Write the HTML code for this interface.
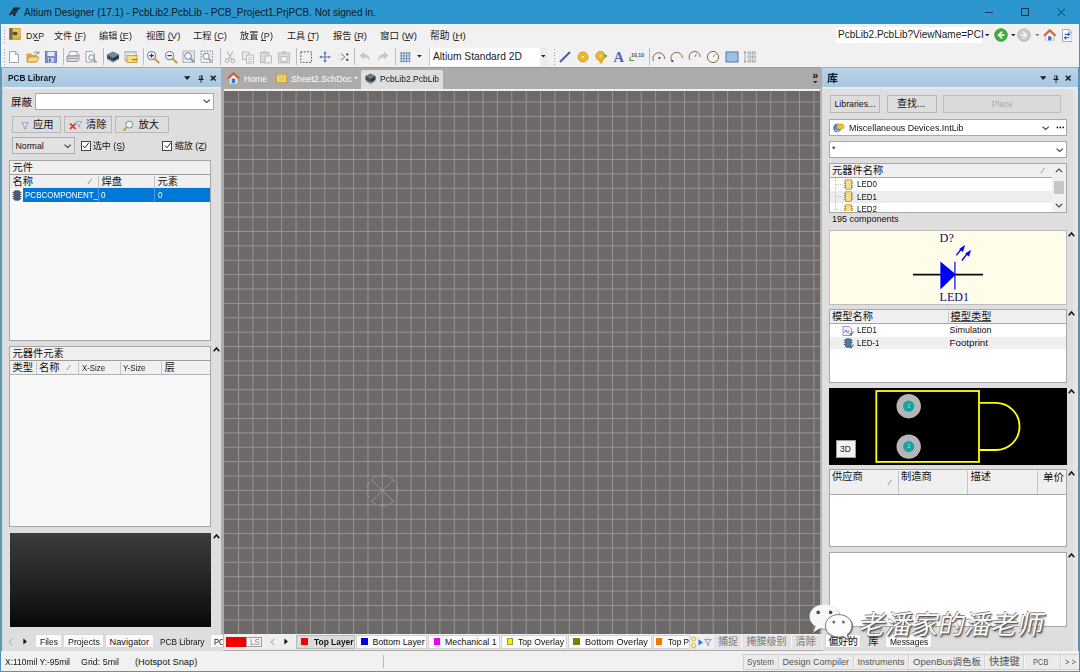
<!DOCTYPE html>
<html lang="zh"><head><meta charset="utf-8"><title>Altium Designer (17.1) - PcbLib2.PcbLib</title>
<style>
html,body{margin:0;padding:0}
body{width:1080px;height:672px;position:relative;overflow:hidden;background:#e6e6e6;font-family:"Liberation Sans","Noto Sans CJK SC",sans-serif;}
div,span,svg{position:absolute;}
span{white-space:pre;line-height:16px;height:16px;transform-origin:0 50%;}
</style></head>
<body>
<div style="left:0px;top:0px;width:1080px;height:24px;background:#2c97cf;"></div>
<div style="left:0px;top:24px;width:1080px;height:43px;background:#f1f1f1;"></div>
<div style="left:0px;top:24px;width:1px;height:648px;background:#4f90bf;"></div>
<div style="left:1079px;top:24px;width:1px;height:648px;background:#4f90bf;"></div>
<div style="left:0px;top:670.6px;width:1080px;height:1.4px;background:#4a9aba;"></div>
<svg style="left:7.5px;top:6.5px;" width="12.5" height="9.5" viewBox="0 0 12.5 9.5"><path d="M0.3 9 L5.6 0.6 H8.2 L7.4 9 H5.2 L5.4 7 H3.6 L2.6 9 Z M4.4 5.4 H5.6 L5.9 3 Z" fill="#17262e"/><path d="M8.2 0.6 H12.3 L11.6 2.3 H10.3 L8.4 6.4 L8 3.2 Z" fill="#17262e"/><path d="M0.3 9 H2.6 L3 8.2 H0.8 Z" fill="#b8962e"/></svg>
<span style="left:24px;top:4.5px;font-size:10px;color:#0a1a24;">Altium Designer (17.1) - PcbLib2.PcbLib - PCB_Project1.PrjPCB. Not signed in.</span>
<div style="left:985px;top:11.7px;width:8.3px;height:0.9px;background:#12344e;"></div>
<div style="left:1021px;top:8px;width:8px;height:8px;border:1px solid #12344e;box-sizing:border-box;"></div>
<svg style="left:1056.8px;top:7.6px;" width="8.6" height="8.6" viewBox="0 0 8.6 8.6"><path d="M0.5 0.5 L8.1 8.1 M8.1 0.5 L0.5 8.1" stroke="#12344e" stroke-width="0.95" fill="none"/></svg>
<div style="left:4px;top:27px;width:1px;height:1px;background:#9aa0a8;"></div>
<div style="left:4px;top:30px;width:1px;height:1px;background:#9aa0a8;"></div>
<div style="left:4px;top:33px;width:1px;height:1px;background:#9aa0a8;"></div>
<div style="left:4px;top:36px;width:1px;height:1px;background:#9aa0a8;"></div>
<div style="left:4px;top:39px;width:1px;height:1px;background:#9aa0a8;"></div>
<div style="left:4px;top:42px;width:1px;height:1px;background:#9aa0a8;"></div>
<svg style="left:9.4px;top:28px;" width="11.5" height="11.6" viewBox="0 0 11.5 11.6"><rect x="0" y="0" width="11.5" height="11.6" fill="#e6c648"/><rect x="0" y="0" width="3.6" height="11.6" fill="#6e6a58"/><rect x="3.6" y="8.2" width="7.9" height="3.4" fill="#d8b83c"/><path d="M3.6 4 H5.5 V7 H3.6 Z" fill="#5a5444"/><circle cx="6.6" cy="5.6" r="1.9" fill="#5a4a3a"/><rect x="0.3" y="0.3" width="10.9" height="11" fill="none" stroke="#a89438" stroke-width="0.6"/></svg>
<span style="left:26px;top:27.6px;font-size:8.75px;color:#1a1a1a;">DXP</span>
<span style="left:54px;top:27.6px;font-size:9px;color:#1a1a1a;">文件 (F)</span>
<span style="left:99px;top:27.6px;font-size:9.25px;color:#1a1a1a;transform:scaleX(0.988);">编辑 (E)</span>
<span style="left:146px;top:27.6px;font-size:9.5px;color:#1a1a1a;">视图 (V)</span>
<span style="left:193px;top:27.6px;font-size:9.25px;color:#1a1a1a;">工程 (C)</span>
<span style="left:240px;top:27.6px;font-size:9.25px;color:#1a1a1a;transform:scaleX(0.988);">放置 (P)</span>
<span style="left:287px;top:27.6px;font-size:9px;color:#1a1a1a;">工具 (T)</span>
<span style="left:333px;top:27.6px;font-size:9.25px;color:#1a1a1a;">报告 (R)</span>
<span style="left:380px;top:27.6px;font-size:9.5px;color:#1a1a1a;">窗口 (W)</span>
<span style="left:430px;top:27.6px;font-size:9.75px;color:#1a1a1a;">帮助 (H)</span>
<div style="left:33.8px;top:39.6px;width:5px;height:0.8px;background:#333;"></div>
<div style="left:74.8px;top:39.6px;width:5px;height:0.8px;background:#333;"></div>
<div style="left:120.3px;top:39.6px;width:5px;height:0.8px;background:#333;"></div>
<div style="left:168.3px;top:39.6px;width:5px;height:0.8px;background:#333;"></div>
<div style="left:215.3px;top:39.6px;width:5px;height:0.8px;background:#333;"></div>
<div style="left:261.3px;top:39.6px;width:5px;height:0.8px;background:#333;"></div>
<div style="left:308.3px;top:39.6px;width:5px;height:0.8px;background:#333;"></div>
<div style="left:355.3px;top:39.6px;width:5px;height:0.8px;background:#333;"></div>
<div style="left:404.8px;top:39.6px;width:5px;height:0.8px;background:#333;"></div>
<div style="left:454.3px;top:39.6px;width:5px;height:0.8px;background:#333;"></div>
<div style="left:836px;top:27px;width:146px;height:16px;background:#ffffff;"></div>
<span style="left:838px;top:27.4px;font-size:10px;color:#1a1a1a;">PcbLib2.PcbLib?ViewName=PCI</span>
<svg style="left:984.7px;top:34.35px;" width="4.6" height="2.8" viewBox="0 0 4.6 2.8"><path d="M0 0 H4.6 L2.3 2.3 Z" fill="#222"/></svg>
<svg style="left:993.6px;top:28.2px;" width="14" height="14" viewBox="0 0 14 14"><circle cx="7" cy="7" r="6.3" fill="#3fae3a" stroke="#2a8a2a" stroke-width="0.7"/><path d="M8.2 3.6 L4.6 7 L8.2 10.4 M4.8 7 H10.5" stroke="#fff" stroke-width="1.6" fill="none"/></svg>
<svg style="left:1010.7px;top:34.35px;" width="4.6" height="2.8" viewBox="0 0 4.6 2.8"><path d="M0 0 H4.6 L2.3 2.3 Z" fill="#222"/></svg>
<svg style="left:1017px;top:28.2px;" width="14" height="14" viewBox="0 0 14 14"><circle cx="7" cy="7" r="6.3" fill="#c9c9c9" stroke="#b0b0b0" stroke-width="0.7"/><path d="M5.8 3.6 L9.4 7 L5.8 10.4 M9.2 7 H3.5" stroke="#f4f4f4" stroke-width="1.6" fill="none"/></svg>
<svg style="left:1034.7px;top:34.35px;" width="4.6" height="2.8" viewBox="0 0 4.6 2.8"><path d="M0 0 H4.6 L2.3 2.3 Z" fill="#777"/></svg>
<svg style="left:1042.8px;top:28.6px;" width="13.5" height="12.8" viewBox="0 0 13.5 12.8"><path d="M0.9 6.8 L6.75 1.2 L12.6 6.8" stroke="#d8602c" stroke-width="1.9" fill="none"/><path d="M2.6 7 L6.75 3.3 L10.9 7 V12.2 H2.6 Z" fill="#f6f8fb" stroke="#9aa6b8" stroke-width="0.7"/><rect x="5" y="7.2" width="3.5" height="4.2" rx="0.6" fill="#3a78d0"/></svg>
<svg style="left:1061.6px;top:29.2px;" width="10.5" height="13" viewBox="0 0 10.5 13"><path d="M0.5 0.5 H7 L10 3.5 V12.5 H0.5 Z" fill="#fbfcfe" stroke="#8a9ab8" stroke-width="0.8"/><path d="M7 0.5 V3.5 H10" fill="none" stroke="#8a9ab8" stroke-width="0.7"/><path d="M2.6 5.4 H7.6 M6 3.9 L7.8 5.4 L6 6.9 M7.6 8.8 H2.6 M4.2 7.3 L2.4 8.8 L4.2 10.3" stroke="#2a62c8" stroke-width="1.1" fill="none"/></svg>
<div style="left:4px;top:49px;width:1px;height:1px;background:#9aa0a8;"></div>
<div style="left:4px;top:52px;width:1px;height:1px;background:#9aa0a8;"></div>
<div style="left:4px;top:55px;width:1px;height:1px;background:#9aa0a8;"></div>
<div style="left:4px;top:58px;width:1px;height:1px;background:#9aa0a8;"></div>
<div style="left:4px;top:61px;width:1px;height:1px;background:#9aa0a8;"></div>
<div style="left:4px;top:64px;width:1px;height:1px;background:#9aa0a8;"></div>
<div style="left:62.9px;top:48px;width:1px;height:17px;background:#b9bcc2;"></div>
<div style="left:102.8px;top:48px;width:1px;height:17px;background:#b9bcc2;"></div>
<div style="left:142.7px;top:48px;width:1px;height:17px;background:#b9bcc2;"></div>
<div style="left:219.5px;top:48px;width:1px;height:17px;background:#b9bcc2;"></div>
<div style="left:296px;top:48px;width:1px;height:17px;background:#b9bcc2;"></div>
<div style="left:354.2px;top:48px;width:1px;height:17px;background:#b9bcc2;"></div>
<div style="left:394.5px;top:48px;width:1px;height:17px;background:#b9bcc2;"></div>
<div style="left:648.9px;top:48px;width:1px;height:17px;background:#b9bcc2;"></div>
<svg style="left:7.3px;top:49.8px;" width="14" height="14" viewBox="0 0 14 14"><path d="M2.5 1.5 H8.5 L11.5 4.5 V12.5 H2.5 Z" fill="#fdfdfe" stroke="#8d98aa" stroke-width="0.9"/><path d="M8.5 1.5 V4.5 H11.5" fill="none" stroke="#8d98aa" stroke-width="0.8"/></svg>
<svg style="left:25.6px;top:49.8px;" width="14" height="14" viewBox="0 0 14 14"><path d="M1 4 H5 L6 5.2 H10.5 V12 H1 Z" fill="#e2b14a" stroke="#b98a2a" stroke-width="0.7"/><path d="M2.8 7 H13 L10.8 12 H1 Z" fill="#f7d983" stroke="#b98a2a" stroke-width="0.7"/><path d="M8 3 Q10.5 0.8 12.5 3.2 M12.8 1 V3.6 H10.3" stroke="#7c8a9c" stroke-width="0.9" fill="none"/></svg>
<svg style="left:44px;top:49.8px;" width="14" height="14" viewBox="0 0 14 14"><rect x="1.5" y="1.5" width="11" height="11" fill="#7f8ccc" stroke="#5a68ac" stroke-width="0.8"/><rect x="3.5" y="1.8" width="7" height="4.2" fill="#e9ecf7"/><rect x="4" y="8" width="6" height="4.5" fill="#c8cde6"/><rect x="5" y="8.8" width="1.6" height="3" fill="#4a5aa0"/></svg>
<svg style="left:66.3px;top:49.8px;" width="14" height="14" viewBox="0 0 14 14"><path d="M4 1.5 H11.5 L10 6 H2.5 Z" fill="#fafafa" stroke="#8a8f98" stroke-width="0.8"/><path d="M1 6 H11.5 L13 4.5 V9.5 L11.5 11.5 H1 Z" fill="#d5d7dc" stroke="#7d828c" stroke-width="0.8"/><path d="M1 8.5 H11.5" stroke="#8a8f98" stroke-width="0.7"/></svg>
<svg style="left:83.7px;top:49.8px;" width="14" height="14" viewBox="0 0 14 14"><path d="M2 1.5 H8 L10.5 4 V12 H2 Z" fill="#fdfdfe" stroke="#8d98aa" stroke-width="0.9"/><circle cx="7.5" cy="7.5" r="2.8" fill="#e8f2fb" stroke="#7d8ea8" stroke-width="1"/><path d="M9.6 9.6 L12.6 12.6" stroke="#c79a3a" stroke-width="1.8"/></svg>
<svg style="left:106px;top:49.8px;" width="14" height="14" viewBox="0 0 14 14"><path d="M7 2 L13 5 L7 8 L1 5 Z" fill="#6f8da6" stroke="#3a4c5a" stroke-width="0.6"/><path d="M1 5 V8.5 L7 11.8 V8 Z" fill="#3c4c58"/><path d="M13 5 V8.5 L7 11.8 V8 Z" fill="#2a3640"/><path d="M1 9.2 L7 12.6 L13 9.2" stroke="#9ab0c0" stroke-width="0.8" fill="none"/></svg>
<svg style="left:124.4px;top:49.8px;" width="14" height="14" viewBox="0 0 14 14"><rect x="1" y="1.5" width="11" height="9" fill="#f4f5f8" stroke="#8a96a8" stroke-width="0.8"/><rect x="1" y="1.5" width="11" height="2" fill="#c4ccd8"/><rect x="3" y="5.5" width="10" height="7" fill="#f7dc7c" stroke="#b8922e" stroke-width="0.8"/><rect x="8" y="9" width="5" height="1.2" fill="#8a7a3a"/></svg>
<svg style="left:145.8px;top:49.8px;" width="14" height="14" viewBox="0 0 14 14"><circle cx="5.6" cy="5.6" r="4.1" fill="#eef5fc" stroke="#7687a0" stroke-width="1.1"/><path d="M3.4 5.6 H7.8 M5.6 3.4 V7.8" stroke="#26364a" stroke-width="1.1"/><path d="M8.7 8.7 L12.6 12.6" stroke="#c9a044" stroke-width="2.1" stroke-linecap="round"/></svg>
<svg style="left:163.7px;top:49.8px;" width="14" height="14" viewBox="0 0 14 14"><circle cx="5.6" cy="5.6" r="4.1" fill="#eef5fc" stroke="#7687a0" stroke-width="1.1"/><path d="M3.4 5.6 H7.8" stroke="#26364a" stroke-width="1.1"/><path d="M8.7 8.7 L12.6 12.6" stroke="#c9a044" stroke-width="2.1" stroke-linecap="round"/></svg>
<svg style="left:182.4px;top:49.8px;" width="14" height="14" viewBox="0 0 14 14"><rect x="1" y="1" width="11.5" height="11.5" fill="#e3e6ea" stroke="#a4a9b2" stroke-width="0.8"/><circle cx="6" cy="6" r="3.3" fill="#f4f8fc" stroke="#7687a0" stroke-width="1"/><path d="M8.5 8.5 L12 12" stroke="#8a93a0" stroke-width="1.8"/></svg>
<svg style="left:200.4px;top:49.8px;" width="14" height="14" viewBox="0 0 14 14"><rect x="1" y="1" width="11.5" height="11.5" fill="#eceef2" stroke="#707a88" stroke-width="0.9" stroke-dasharray="1.6 1.2"/><circle cx="6.2" cy="6.2" r="3.1" fill="#f4f8fc" stroke="#7687a0" stroke-width="1"/><path d="M8.6 8.6 L11.6 11.6" stroke="#c9a044" stroke-width="1.8"/></svg>
<svg style="left:222.7px;top:49.8px;" width="14" height="14" viewBox="0 0 14 14"><path d="M4 1.5 L8.5 9 M10 1.5 L5.5 9" stroke="#b4b7bc" stroke-width="1.1" fill="none"/><circle cx="4.2" cy="10.8" r="1.9" fill="none" stroke="#b4b7bc" stroke-width="1.1"/><circle cx="9.8" cy="10.8" r="1.9" fill="none" stroke="#b4b7bc" stroke-width="1.1"/></svg>
<svg style="left:240.6px;top:49.8px;" width="14" height="14" viewBox="0 0 14 14"><rect x="1.5" y="2" width="6.5" height="7.5" fill="#ececee" stroke="#b4b7bc" stroke-width="0.9"/><rect x="5.5" y="5" width="7" height="8" fill="#f2f2f4" stroke="#b4b7bc" stroke-width="0.9"/><path d="M7 7.5 H11 M7 9.5 H11 M7 11.5 H10" stroke="#b4b7bc" stroke-width="0.7"/></svg>
<svg style="left:259px;top:49.8px;" width="14" height="14" viewBox="0 0 14 14"><rect x="1.5" y="2.5" width="8.5" height="10" fill="#d9dadd" stroke="#b4b7bc" stroke-width="0.9"/><rect x="3.8" y="1.2" width="4" height="2.4" fill="#c3c5c9"/><rect x="6" y="6" width="6.5" height="7" fill="#f2f2f4" stroke="#b4b7bc" stroke-width="0.9"/></svg>
<svg style="left:277.3px;top:49.8px;" width="14" height="14" viewBox="0 0 14 14"><rect x="1.5" y="3" width="11" height="9.8" fill="#dcdde0" stroke="#b4b7bc" stroke-width="0.9"/><rect x="4.5" y="1.2" width="5" height="3" fill="#c3c5c9"/><rect x="4" y="6.5" width="6" height="5" fill="#efeff1" stroke="#b4b7bc" stroke-width="0.8"/></svg>
<svg style="left:299px;top:49.8px;" width="14" height="14" viewBox="0 0 14 14"><rect x="1.8" y="1.8" width="10.6" height="10.6" fill="none" stroke="#4a5666" stroke-width="0.95" stroke-dasharray="1.8 1.3"/></svg>
<svg style="left:318px;top:49.8px;" width="14" height="14" viewBox="0 0 14 14"><path d="M7 2.5 V11.5 M2.5 7 H11.5" stroke="#5878b0" stroke-width="1.1"/><path d="M7 1.2 L8.6 3.4 H5.4 Z M7 12.8 L8.6 10.6 H5.4 Z M1.2 7 L3.4 5.4 V8.6 Z M12.8 7 L10.6 5.4 V8.6 Z" fill="#4a6aa8"/></svg>
<svg style="left:336.3px;top:49.8px;" width="14" height="14" viewBox="0 0 14 14"><path d="M4.8 3.4 L8.8 7 L4.8 10.6" stroke="#687280" stroke-width="1" fill="none"/><path d="M2 4.2 L3.4 5.6 M2 9.8 L3.4 8.4" stroke="#b4bac4" stroke-width="0.9" /><rect x="10.3" y="3.4" width="2" height="2" fill="#3a4452"/><rect x="10.3" y="8.8" width="2" height="2" fill="#3a4452"/></svg>
<svg style="left:357.7px;top:49.8px;" width="14" height="14" viewBox="0 0 14 14"><path d="M1.5 5.5 L6 1.8 V4 Q12 4 12 11.5 Q10 7.2 6 7.2 V9.4 Z" fill="#c3c6cb"/></svg>
<svg style="left:376px;top:49.8px;" width="14" height="14" viewBox="0 0 14 14"><path d="M12.5 5.5 L8 1.8 V4 Q2 4 2 11.5 Q4 7.2 8 7.2 V9.4 Z" fill="#c3c6cb"/></svg>
<svg style="left:397.65px;top:49.8px;" width="14.5" height="14" viewBox="0 0 14.5 14"><path d="M3.2 1.8 V12.4 M5.9 1.8 V12.4 M8.6 1.8 V12.4 M11.3 1.8 V12.4 M1.8 3.2 H12.6 M1.8 5.9 H12.6 M1.8 8.6 H12.6 M1.8 11.3 H12.6" stroke="#5674aa" stroke-width="0.75"/></svg>
<svg style="left:417.3px;top:55.3px;" width="4.8" height="2.9" viewBox="0 0 4.8 2.9"><path d="M0 0 H4.8 L2.4 2.4 Z" fill="#222"/></svg>
<div style="left:428.5px;top:48px;width:1px;height:17.5px;background:#c4c6ca;"></div>
<div style="left:430px;top:48px;width:110px;height:18px;background:#ffffff;"></div>
<div style="left:540px;top:48px;width:8px;height:18px;background:#ececec;"></div>
<span style="left:433px;top:48.5px;font-size:10.25px;color:#1a1a1a;">Altium Standard 2D</span>
<svg style="left:540.6px;top:55.3px;" width="4.8" height="2.9" viewBox="0 0 4.8 2.9"><path d="M0 0 H4.8 L2.4 2.4 Z" fill="#222"/></svg>
<div style="left:554px;top:49px;width:1px;height:1px;background:#9aa0a8;"></div>
<div style="left:554px;top:52px;width:1px;height:1px;background:#9aa0a8;"></div>
<div style="left:554px;top:55px;width:1px;height:1px;background:#9aa0a8;"></div>
<div style="left:554px;top:58px;width:1px;height:1px;background:#9aa0a8;"></div>
<div style="left:554px;top:61px;width:1px;height:1px;background:#9aa0a8;"></div>
<div style="left:554px;top:64px;width:1px;height:1px;background:#9aa0a8;"></div>
<svg style="left:557.9px;top:49.8px;" width="14" height="14" viewBox="0 0 14 14"><path d="M2 12 L12 2" stroke="#4a5f9a" stroke-width="2"/></svg>
<svg style="left:575.8px;top:49.8px;" width="14" height="14" viewBox="0 0 14 14"><circle cx="7" cy="7" r="5" fill="#f0c020" stroke="#b88a10" stroke-width="0.8"/><circle cx="7" cy="7" r="1.8" fill="#fbf2c8" stroke="#b88a10" stroke-width="0.6"/></svg>
<svg style="left:593.7px;top:49.8px;" width="14" height="14" viewBox="0 0 14 14"><rect x="5.5" y="8" width="3" height="5.5" fill="#e8b418"/><circle cx="6.5" cy="6" r="4.6" fill="#f0c020" stroke="#b88a10" stroke-width="0.8"/><circle cx="6.5" cy="6" r="1.7" fill="#fbf2c8" stroke="#b88a10" stroke-width="0.6"/><path d="M10.5 4.2 L13.5 6 L10.5 7.8 Z" fill="#3aa83a"/></svg>
<span style="left:613.5px;top:48.5px;font-size:14.5px;color:#4a66b8;font-weight:bold;font-family:'Liberation Serif','Noto Serif CJK SC',serif;">A</span>
<span style="left:631px;top:47px;font-size:5.25px;color:#4a5260;font-weight:bold;">10,10</span>
<svg style="left:629px;top:56px;" width="6" height="6" viewBox="0 0 6 6"><path d="M1 1 V4.5 H5" stroke="#3a9a3a" stroke-width="1.1" fill="none"/></svg>
<svg style="left:651.8px;top:49.8px;" width="14" height="14" viewBox="0 0 14 14"><path d="M1.5 11 A5.8 5.8 0 1 1 12.5 9" stroke="#8a6a4a" stroke-width="1" fill="none"/><circle cx="7.5" cy="8" r="1.1" fill="#2a3a7a"/></svg>
<svg style="left:670px;top:49.8px;" width="14" height="14" viewBox="0 0 14 14"><path d="M2 11.5 A5.8 5.8 0 1 1 12.5 8" stroke="#8a6a4a" stroke-width="1" fill="none"/><circle cx="2.4" cy="11" r="1.1" fill="#2a3a7a"/></svg>
<svg style="left:687.8px;top:49.8px;" width="14" height="14" viewBox="0 0 14 14"><path d="M2 10 A5.6 5.6 0 1 1 12.3 7" stroke="#8a6a4a" stroke-width="1" fill="none"/><path d="M7 7 L8.5 3.5" stroke="#8a6a4a" stroke-width="0.8"/></svg>
<svg style="left:706px;top:49.8px;" width="14" height="14" viewBox="0 0 14 14"><circle cx="7" cy="7" r="5.6" stroke="#8a6a4a" stroke-width="1" fill="#f8f6f2"/><path d="M7 7 L9.5 4" stroke="#8a6a4a" stroke-width="0.8"/></svg>
<svg style="left:724.5px;top:49.8px;" width="14" height="14" viewBox="0 0 14 14"><rect x="1" y="2" width="12" height="10" fill="#9dc0e4" stroke="#4a6a9a" stroke-width="0.9"/></svg>
<svg style="left:742.8px;top:49.8px;" width="14" height="14" viewBox="0 0 14 14"><path d="M2 1 V13 M1 2.5 H3 M1 11.5 H3" stroke="#7a8088" stroke-width="0.7"/><rect x="5" y="2" width="3" height="2" fill="none" stroke="#8a9098" stroke-width="0.7"/><rect x="9.5" y="2" width="3" height="2" fill="none" stroke="#8a9098" stroke-width="0.7"/><rect x="5" y="6" width="3" height="2" fill="none" stroke="#8a9098" stroke-width="0.7"/><rect x="9.5" y="6" width="3" height="2" fill="none" stroke="#8a9098" stroke-width="0.7"/><rect x="5" y="10" width="3" height="2" fill="none" stroke="#8a9098" stroke-width="0.7"/><rect x="9.5" y="10" width="3" height="2" fill="none" stroke="#8a9098" stroke-width="0.7"/></svg>
<div style="left:1px;top:67px;width:223px;height:584px;background:#dedede;"></div>
<div style="left:2px;top:67px;width:219px;height:1px;background:#a0a8ae;"></div>
<div style="left:2px;top:68px;width:219px;height:19px;background:linear-gradient(#c0d4e3 0%,#b3d0e7 25%,#a6c8e1 100%);"></div>
<div style="left:2px;top:87px;width:219px;height:2px;background:#e8eaec;"></div>
<span style="left:8px;top:69.5px;font-size:8.75px;color:#0c1822;transform:scaleX(0.949);font-weight:bold;">PCB Library</span>
<svg style="left:184.3px;top:76px;" width="6.4" height="4.4" viewBox="0 0 6.4 4.4"><path d="M0 0.3 H6.4 L3.2 4 Z" fill="#1a1a1a"/></svg>
<svg style="left:197.5px;top:74.6px;" width="6" height="8" viewBox="0 0 6 8"><path d="M1.5 0.4 H4.5 V4 H5.6 V5 H0.4 V4 H1.5 Z" fill="#1a1a1a"/><path d="M3 5 V7.8" stroke="#1a1a1a" stroke-width="0.9"/><rect x="2.2" y="1" width="0.9" height="2.8" fill="#c8dbe8"/></svg>
<svg style="left:209.8px;top:75.2px;" width="6.4" height="6.4" viewBox="0 0 6.4 6.4"><path d="M0.8 0.8 L5.6 5.6 M5.6 0.8 L0.8 5.6" stroke="#1a1a1a" stroke-width="1.45" fill="none"/></svg>
<div style="left:221px;top:88px;width:3px;height:546px;background:#adadad;"></div>
<span style="left:11px;top:93.5px;font-size:10.5px;color:#111;">屏蔽</span>
<div style="left:35px;top:93px;width:178.5px;height:17px;background:#fff;border:1px solid #a8a8a8;box-sizing:border-box;"></div>
<svg style="left:202.8px;top:99.4px;" width="7.4" height="4.7" viewBox="0 0 7.4 4.7"><path d="M0.5 0.6 L3.7 3.5 L6.9 0.6" stroke="#444" stroke-width="1.1" fill="none"/></svg>
<div style="left:12px;top:116px;width:48.5px;height:17px;background:#dddddd;border:1px solid #b8b8b8;box-sizing:border-box;"></div>
<div style="left:63.5px;top:116px;width:48.1px;height:17px;background:#dddddd;border:1px solid #b8b8b8;box-sizing:border-box;"></div>
<div style="left:114.7px;top:116px;width:53.9px;height:17px;background:#dddddd;border:1px solid #b8b8b8;box-sizing:border-box;"></div>
<svg style="left:20.5px;top:121.5px;" width="8" height="8" viewBox="0 0 8 8"><path d="M0.5 0.8 H7.5 L4.9 4 V7.2 L3.1 6.2 V4 Z" fill="#dfeaf6" stroke="#6f8fb8" stroke-width="0.8"/></svg>
<span style="left:33px;top:116.5px;font-size:10.25px;color:#111;">应用</span>
<svg style="left:69px;top:121px;" width="14" height="9" viewBox="0 0 14 9"><path d="M1 2.5 L6.5 8 M6.5 2.5 L1 8" stroke="#e02a1a" stroke-width="1.7" fill="none"/><g transform="translate(6.5,0) scale(0.85)"><path d="M0.5 0.8 H7.5 L4.9 4 V7.2 L3.1 6.2 V4 Z" fill="#dfeaf6" stroke="#6f8fb8" stroke-width="0.8"/></g></svg>
<span style="left:86px;top:116.5px;font-size:10.25px;color:#111;">清除</span>
<svg style="left:123px;top:119.5px;" width="11" height="11" viewBox="0 0 11 11"><circle cx="6.3" cy="4.6" r="3.5" fill="#f2f6fb" stroke="#7687a0" stroke-width="1"/><path d="M3.8 7.2 L1 10" stroke="#c9a044" stroke-width="1.8" stroke-linecap="round"/></svg>
<span style="left:138.5px;top:116.5px;font-size:10.25px;color:#111;">放大</span>
<div style="left:12px;top:137px;width:62.5px;height:16.5px;background:#e2e2e2;border:1px solid #b0b0b0;box-sizing:border-box;"></div>
<span style="left:15.5px;top:137.7px;font-size:8.75px;color:#111;">Normal</span>
<svg style="left:63.8px;top:143.6px;" width="7.4" height="4.7" viewBox="0 0 7.4 4.7"><path d="M0.5 0.6 L3.7 3.5 L6.9 0.6" stroke="#444" stroke-width="1.1" fill="none"/></svg>
<div style="left:80.5px;top:140.5px;width:10.2px;height:10.2px;background:#fff;border:1px solid #444;box-sizing:border-box;"></div>
<svg style="left:82px;top:142.3px;" width="7.5" height="6.8" viewBox="0 0 7.5 6.8"><path d="M0.8 3.6 L2.9 5.8 L6.8 0.8" stroke="#222" stroke-width="1" fill="none"/></svg>
<span style="left:93px;top:137.7px;font-size:8.75px;color:#111;transform:scaleX(1.013);">选中 (S)</span>
<div style="left:118px;top:149.8px;width:4.5px;height:0.8px;background:#333;"></div>
<div style="left:162.2px;top:140.5px;width:10.2px;height:10.2px;background:#fff;border:1px solid #444;box-sizing:border-box;"></div>
<svg style="left:163.7px;top:142.3px;" width="7.5" height="6.8" viewBox="0 0 7.5 6.8"><path d="M0.8 3.6 L2.9 5.8 L6.8 0.8" stroke="#222" stroke-width="1" fill="none"/></svg>
<span style="left:174.7px;top:137.7px;font-size:9px;color:#111;">缩放 (Z)</span>
<div style="left:199.5px;top:149.8px;width:4.5px;height:0.8px;background:#333;"></div>
<div style="left:9.4px;top:160.4px;width:201.4px;height:180.8px;background:#f8f8f8;border:1px solid #a6a6a6;box-sizing:border-box;"></div>
<div style="left:10.4px;top:161.4px;width:199.4px;height:13.3px;background:#f0f0f0;"></div>
<div style="left:10.4px;top:174px;width:199.4px;height:1px;background:#9c9c9c;"></div>
<span style="left:12.5px;top:160px;font-size:10.25px;color:#111;">元件</span>
<div style="left:10.4px;top:175px;width:199.4px;height:13px;background:#f0f0f0;"></div>
<div style="left:10.4px;top:187.4px;width:199.4px;height:1px;background:#e4e4e4;"></div>
<span style="left:12.5px;top:174px;font-size:10.25px;color:#111;">名称</span>
<span style="left:87.5px;top:174px;font-size:8px;color:#888;transform:scaleX(1.349);font-style:italic;">/</span>
<div style="left:98px;top:176px;width:0.8px;height:12px;background:#c4c4c4;"></div>
<span style="left:101.5px;top:174px;font-size:10.25px;color:#111;">焊盘</span>
<div style="left:154.2px;top:176px;width:0.8px;height:12px;background:#c4c4c4;"></div>
<span style="left:157.5px;top:174px;font-size:10.25px;color:#111;">元素</span>
<div style="left:23px;top:188.4px;width:186.8px;height:13.2px;background:#0078d7;"></div>
<div style="left:98px;top:188.4px;width:0.8px;height:13.2px;background:#4aa0e6;"></div>
<div style="left:154.2px;top:188.4px;width:0.8px;height:13.2px;background:#4aa0e6;"></div>
<svg style="left:11.8px;top:189.6px;" width="10" height="11" viewBox="0 0 10 11"><rect x="2.2" y="0.8" width="5.6" height="9.4" rx="1" fill="#4a5a7c" stroke="#34405a" stroke-width="0.7"/><path d="M0.6 2.5 H2.2 M0.6 4.5 H2.2 M0.6 6.5 H2.2 M0.6 8.5 H2.2 M7.8 2.5 H9.4 M7.8 4.5 H9.4 M7.8 6.5 H9.4 M7.8 8.5 H9.4" stroke="#39424c" stroke-width="0.9"/></svg>
<span style="left:24.5px;top:187px;font-size:8.75px;color:#fff;transform:scaleX(0.916);">PCBCOMPONENT_</span>
<span style="left:101px;top:187px;font-size:8.75px;color:#fff;transform:scaleX(0.925);">0</span>
<span style="left:157.5px;top:187px;font-size:8.75px;color:#fff;transform:scaleX(0.925);">0</span>
<div style="left:9.4px;top:346.2px;width:201.4px;height:181.3px;background:#f8f8f8;border:1px solid #a6a6a6;box-sizing:border-box;"></div>
<div style="left:10.4px;top:347.2px;width:199.4px;height:13.2px;background:#f0f0f0;"></div>
<div style="left:10.4px;top:359.9px;width:199.4px;height:0.8px;background:#9c9c9c;"></div>
<span style="left:12.5px;top:346px;font-size:10.25px;color:#111;">元器件元素</span>
<div style="left:10.4px;top:360.7px;width:199.4px;height:13.8px;background:#f0f0f0;"></div>
<div style="left:10.4px;top:374px;width:199.4px;height:0.8px;background:#b4b4b4;"></div>
<span style="left:12.5px;top:359.8px;font-size:10.25px;color:#111;">类型</span>
<div style="left:35.8px;top:362px;width:0.8px;height:12px;background:#c4c4c4;"></div>
<div style="left:78.1px;top:362px;width:0.8px;height:12px;background:#c4c4c4;"></div>
<div style="left:119.6px;top:362px;width:0.8px;height:12px;background:#c4c4c4;"></div>
<div style="left:160.6px;top:362px;width:0.8px;height:12px;background:#c4c4c4;"></div>
<span style="left:39px;top:359.8px;font-size:10.25px;color:#111;">名称</span>
<span style="left:67px;top:359.8px;font-size:8px;color:#888;transform:scaleX(1.349);font-style:italic;">/</span>
<span style="left:81.5px;top:360.2px;font-size:8.75px;color:#222;transform:scaleX(0.892);">X-Size</span>
<span style="left:123px;top:360.2px;font-size:8.75px;color:#222;transform:scaleX(0.901);">Y-Size</span>
<span style="left:164.5px;top:359.8px;font-size:10.25px;color:#111;">层</span>
<svg style="left:212.5px;top:347px;" width="7" height="5" viewBox="0 0 7 5"><path d="M0.7 4.3 L3.5 1 L6.3 4.3" stroke="#111" stroke-width="1.5" fill="none"/></svg>
<div style="left:10px;top:532.5px;width:200.5px;height:94.8px;background:linear-gradient(#3c3c3c,#242424 50%,#090909);"></div>
<svg style="left:212.5px;top:533.5px;" width="7" height="5" viewBox="0 0 7 5"><path d="M0.7 4.3 L3.5 1 L6.3 4.3" stroke="#111" stroke-width="1.5" fill="none"/></svg>
<svg style="left:7.5px;top:637.5px;" width="5" height="8" viewBox="0 0 5 8"><path d="M4.2 0.8 L1 4 L4.2 7.2" stroke="#b8b8b8" stroke-width="1.1" fill="none"/></svg>
<svg style="left:22.5px;top:638.3px;" width="4.5" height="7" viewBox="0 0 4.5 7"><path d="M0.4 0.4 L3.9 3.5 L0.4 6.6 Z" fill="#111"/></svg>
<div style="left:34.8px;top:634.4px;width:27.5px;height:14px;background:#fbfbfb;border:1px solid #d9d9d9;box-sizing:border-box;"></div>
<span style="left:39.5px;top:633.6px;font-size:8.75px;color:#111;transform:scaleX(0.974);">Files</span>
<div style="left:63px;top:634.4px;width:41.3px;height:14px;background:#fbfbfb;border:1px solid #d9d9d9;box-sizing:border-box;"></div>
<span style="left:67.5px;top:633.6px;font-size:8.75px;color:#111;transform:scaleX(1.012);">Projects</span>
<div style="left:105px;top:634.4px;width:48.8px;height:14px;background:#fbfbfb;border:1px solid #d9d9d9;box-sizing:border-box;"></div>
<span style="left:109.5px;top:633.6px;font-size:9.25px;color:#111;">Navigator</span>
<span style="left:159.5px;top:633.6px;font-size:8.75px;color:#111;transform:scaleX(0.943);">PCB Library</span>
<div style="left:209.5px;top:634.4px;width:14.5px;height:14px;background:#fbfbfb;border:1px solid #d9d9d9;box-sizing:border-box;border-right:none;"></div>
<span style="left:214px;top:633.8px;font-size:8.75px;color:#111;transform:scaleX(0.864);width:9.5px;overflow:hidden;">PC</span>
<div style="left:221px;top:67px;width:601px;height:23px;background:#ababab;"></div>
<div style="left:221px;top:67px;width:601px;height:1px;background:#9c9c9c;"></div>
<div style="left:361px;top:70px;width:82px;height:20px;background:#dedede;border-radius:2px 2px 0 0;"></div>
<div style="left:224px;top:88.6px;width:596px;height:2.4px;background:#f0f0f0;"></div>
<svg style="left:227.3px;top:72.2px;" width="13" height="12.5" viewBox="0 0 13 12.5"><path d="M0.8 6.6 L6.5 1.2 L12.2 6.6" stroke="#d8602c" stroke-width="2" fill="none"/><path d="M2.4 6.8 L6.5 3.2 L10.6 6.8 V11.8 H2.4 Z" fill="#f6f8fb" stroke="#9aa6b8" stroke-width="0.6"/><rect x="4.6" y="6.6" width="3.8" height="4.4" rx="0.6" fill="#3a78d0"/></svg>
<span style="left:243.5px;top:70.5px;font-size:8.75px;color:#fff;transform:scaleX(0.985);">Home</span>
<svg style="left:276px;top:73px;" width="11" height="10" viewBox="0 0 11 10"><rect x="0.5" y="0.5" width="10" height="9" fill="#f4dc84" stroke="#b8962e" stroke-width="0.8"/><rect x="0.5" y="0.5" width="10" height="2.4" fill="#d8b84a"/><path d="M2.5 5 H8.5 M2.5 7 H8.5" stroke="#b8962e" stroke-width="0.6"/></svg>
<span style="left:291px;top:70.5px;font-size:8.75px;color:#fff;">Sheet2.SchDoc *</span>
<svg style="left:365px;top:72.5px;" width="11" height="11" viewBox="0 0 11 11"><path d="M5.5 1 L10.5 3.5 L5.5 6 L0.5 3.5 Z" fill="#6a7a88" stroke="#34444f" stroke-width="0.6"/><path d="M0.5 3.5 V7 L5.5 9.8 V6 Z" fill="#3c4c58"/><path d="M10.5 3.5 V7 L5.5 9.8 V6 Z" fill="#2a3640"/><path d="M1 8.2 L5.5 10.6 L10 8.2" stroke="#5a6a78" stroke-width="0.7" fill="none"/></svg>
<span style="left:380px;top:70.5px;font-size:8.75px;color:#111;transform:scaleX(0.970);">PcbLib2.PcbLib</span>
<div style="left:224px;top:91px;width:596px;height:543px;background:#6d6968;"></div>
<svg style="left:224px;top:91px;" width="596" height="543" viewBox="0 0 596 543"><path d="M14.50 0V543M28.88 0V543M43.27 0V543M57.65 0V543M72.04 0V543M86.43 0V543M100.81 0V543M115.19 0V543M129.58 0V543M143.97 0V543M158.35 0V543M172.74 0V543M187.12 0V543M201.50 0V543M215.89 0V543M230.27 0V543M244.66 0V543M259.04 0V543M273.43 0V543M287.81 0V543M302.20 0V543M316.59 0V543M330.97 0V543M345.36 0V543M359.74 0V543M374.12 0V543M388.51 0V543M402.89 0V543M417.28 0V543M431.66 0V543M446.05 0V543M460.43 0V543M474.82 0V543M489.20 0V543M503.59 0V543M517.97 0V543M532.36 0V543M546.75 0V543M561.13 0V543M575.51 0V543M589.90 0V543M0 11.00H596M0 25.39H596M0 39.77H596M0 54.16H596M0 68.54H596M0 82.93H596M0 97.31H596M0 111.69H596M0 126.08H596M0 140.47H596M0 154.85H596M0 169.24H596M0 183.62H596M0 198.00H596M0 212.39H596M0 226.77H596M0 241.16H596M0 255.54H596M0 269.93H596M0 284.31H596M0 298.70H596M0 313.08H596M0 327.47H596M0 341.86H596M0 356.24H596M0 370.62H596M0 385.01H596M0 399.39H596M0 413.78H596M0 428.16H596M0 442.55H596M0 456.93H596M0 471.32H596M0 485.70H596M0 500.09H596M0 514.47H596M0 528.86H596" stroke="#a29e9c" stroke-width="0.8" fill="none"/></svg>
<svg style="left:363px;top:471px;" width="40" height="40" viewBox="0 0 40 40"><circle cx="19.4" cy="19.5" r="15.3" fill="none" stroke="#989492" stroke-width="1" stroke-dasharray="7 3"/><path d="M8.6 8.7 L30.2 30.3 M30.2 8.7 L8.6 30.3" stroke="#989492" stroke-width="1"/></svg>
<div style="left:820px;top:67px;width:2px;height:567px;background:#b4b4b4;"></div>
<div style="left:810px;top:68px;width:12px;height:20px;background:#ababab;"></div>
<span style="left:812.3px;top:67.2px;font-size:10.75px;color:#111;font-weight:bold;">»</span>
<svg style="left:813px;top:80.85px;" width="4.6" height="2.8" viewBox="0 0 4.6 2.8"><path d="M0 0 H4.6 L2.3 2.3 Z" fill="#222"/></svg>
<div style="left:822px;top:67px;width:257px;height:584px;background:#dedede;"></div>
<div style="left:822px;top:67px;width:256px;height:1px;background:#a0a8ae;"></div>
<div style="left:822px;top:68px;width:256px;height:19px;background:linear-gradient(#c0d4e3 0%,#b3d0e7 25%,#a6c8e1 100%);"></div>
<div style="left:822px;top:87px;width:256px;height:2px;background:#e8eaec;"></div>
<span style="left:827px;top:69.5px;font-size:10.5px;color:#0c1822;transform:scaleX(1.048);font-weight:bold;">库</span>
<svg style="left:1039.8px;top:76px;" width="6.4" height="4.4" viewBox="0 0 6.4 4.4"><path d="M0 0.3 H6.4 L3.2 4 Z" fill="#1a1a1a"/></svg>
<svg style="left:1053px;top:74.6px;" width="6" height="8" viewBox="0 0 6 8"><path d="M1.5 0.4 H4.5 V4 H5.6 V5 H0.4 V4 H1.5 Z" fill="#1a1a1a"/><path d="M3 5 V7.8" stroke="#1a1a1a" stroke-width="0.9"/><rect x="2.2" y="1" width="0.9" height="2.8" fill="#c8dbe8"/></svg>
<svg style="left:1065.3px;top:75.2px;" width="6.4" height="6.4" viewBox="0 0 6.4 6.4"><path d="M0.8 0.8 L5.6 5.6 M5.6 0.8 L0.8 5.6" stroke="#1a1a1a" stroke-width="1.45" fill="none"/></svg>
<div style="left:1073px;top:89px;width:5px;height:562px;background:#e6e6e6;"></div>
<div style="left:829.5px;top:94.6px;width:50.1px;height:18px;background:#dddddd;border:1px solid #b8b8b8;box-sizing:border-box;"></div>
<span style="left:834.5px;top:95.8px;font-size:8.75px;color:#111;">Libraries...</span>
<div style="left:886.5px;top:94.6px;width:50.1px;height:18px;background:#dddddd;border:1px solid #b8b8b8;box-sizing:border-box;"></div>
<span style="left:897px;top:95.5px;font-size:10px;color:#111;">查找...</span>
<div style="left:943.4px;top:94.6px;width:117.2px;height:18px;background:#dadada;border:1px solid #bebebe;box-sizing:border-box;"></div>
<span style="left:991.5px;top:95.8px;font-size:8.75px;color:#a8a8a8;transform:scaleX(0.959);">Place</span>
<div style="left:829px;top:119px;width:237.5px;height:17px;background:#fff;border:1px solid #a8a8a8;box-sizing:border-box;"></div>
<svg style="left:832.5px;top:122px;" width="12" height="11" viewBox="0 0 12 11"><ellipse cx="4.2" cy="6" rx="3.6" ry="4" fill="#5a86c8" stroke="#3a5a98" stroke-width="0.6"/><path d="M4 2 H9.5 L11.5 4.5 L9.5 7 H4 Z" fill="#f0c030" stroke="#b8902a" stroke-width="0.6"/><path d="M2 7.5 Q4 10 7 9" stroke="#d8e4f4" stroke-width="0.9" fill="none"/></svg>
<span style="left:848.5px;top:119.6px;font-size:9px;color:#111;transform:scaleX(0.987);">Miscellaneous Devices.IntLib</span>
<svg style="left:1042.3px;top:125.5px;" width="7.4" height="4.7" viewBox="0 0 7.4 4.7"><path d="M0.5 0.6 L3.7 3.5 L6.9 0.6" stroke="#444" stroke-width="1.1" fill="none"/></svg>
<svg style="left:1055.5px;top:125.5px;" width="9" height="3" viewBox="0 0 9 3"><circle cx="1.4" cy="1.4" r="0.85" fill="#111"/><circle cx="4.3" cy="1.4" r="0.85" fill="#111"/><circle cx="7.2" cy="1.4" r="0.85" fill="#111"/></svg>
<div style="left:829px;top:141px;width:237.5px;height:17px;background:#fff;border:1px solid #a8a8a8;box-sizing:border-box;"></div>
<span style="left:832px;top:140.5px;font-size:9px;color:#111;">*</span>
<svg style="left:1055.8px;top:147.6px;" width="7.4" height="4.7" viewBox="0 0 7.4 4.7"><path d="M0.5 0.6 L3.7 3.5 L6.9 0.6" stroke="#444" stroke-width="1.1" fill="none"/></svg>
<div style="left:829px;top:163.3px;width:237.5px;height:49.7px;background:#fff;border:1px solid #a6a6a6;box-sizing:border-box;"></div>
<div style="left:830px;top:164.3px;width:221.5px;height:13.2px;background:#f0f0f0;"></div>
<div style="left:830px;top:177px;width:221.5px;height:0.8px;background:#a8a8a8;"></div>
<span style="left:832px;top:163px;font-size:10.25px;color:#111;">元器件名称</span>
<span style="left:1040.5px;top:163px;font-size:8px;color:#888;transform:scaleX(1.349);font-style:italic;">/</span>
<div style="left:1051.5px;top:164.3px;width:14px;height:47.7px;background:#f0f0f0;"></div>
<svg style="left:1055px;top:168px;" width="8" height="5" viewBox="0 0 8 5"><path d="M0.8 4.2 L4 1 L7.2 4.2" stroke="#444" stroke-width="1.2" fill="none"/></svg>
<div style="left:1053.5px;top:181px;width:10.5px;height:13px;background:#c6c6c6;"></div>
<svg style="left:1055px;top:203px;" width="8" height="5" viewBox="0 0 8 5"><path d="M0.8 0.8 L4 4 L7.2 0.8" stroke="#444" stroke-width="1.2" fill="none"/></svg>
<div style="left:830px;top:190.6px;width:221.5px;height:12.4px;background:#ededed;"></div>
<svg style="left:842.5px;top:178.8px;" width="11" height="11" viewBox="0 0 11 11"><rect x="2.6" y="0.8" width="5.8" height="9.4" fill="#f6dc8c" stroke="#b8902a" stroke-width="0.8"/><path d="M0.8 2.5 H2.6 M0.8 4.5 H2.6 M0.8 6.5 H2.6 M0.8 8.5 H2.6 M8.4 2.5 H10.2 M8.4 4.5 H10.2 M8.4 6.5 H10.2 M8.4 8.5 H10.2" stroke="#b8902a" stroke-width="0.9"/></svg>
<span style="left:856.5px;top:176.3px;font-size:8.75px;color:#111;transform:scaleX(0.914);">LED0</span>
<svg style="left:836px;top:183.8px;" width="6.5" height="1" viewBox="0 0 6.5 1"><path d="M0 0.5 H6.5" stroke="#b0b0b0" stroke-width="0.8" stroke-dasharray="1 1"/></svg>
<svg style="left:842.5px;top:191.3px;" width="11" height="11" viewBox="0 0 11 11"><rect x="2.6" y="0.8" width="5.8" height="9.4" fill="#f6dc8c" stroke="#b8902a" stroke-width="0.8"/><path d="M0.8 2.5 H2.6 M0.8 4.5 H2.6 M0.8 6.5 H2.6 M0.8 8.5 H2.6 M8.4 2.5 H10.2 M8.4 4.5 H10.2 M8.4 6.5 H10.2 M8.4 8.5 H10.2" stroke="#b8902a" stroke-width="0.9"/></svg>
<span style="left:856.5px;top:188.8px;font-size:8.75px;color:#111;transform:scaleX(0.914);">LED1</span>
<svg style="left:836px;top:196.3px;" width="6.5" height="1" viewBox="0 0 6.5 1"><path d="M0 0.5 H6.5" stroke="#b0b0b0" stroke-width="0.8" stroke-dasharray="1 1"/></svg>
<svg style="left:842.5px;top:203.8px;" width="11" height="7.5" viewBox="0 0 11 7.5"><rect x="2.6" y="0.8" width="5.8" height="9.4" fill="#f6dc8c" stroke="#b8902a" stroke-width="0.8"/><path d="M0.8 2.5 H2.6 M0.8 4.5 H2.6 M0.8 6.5 H2.6 M0.8 8.5 H2.6 M8.4 2.5 H10.2 M8.4 4.5 H10.2 M8.4 6.5 H10.2 M8.4 8.5 H10.2" stroke="#b8902a" stroke-width="0.9"/></svg>
<span style="left:856.5px;top:201.3px;font-size:8.75px;color:#111;transform:scaleX(0.914);height:10.5px;overflow:hidden;">LED2</span>
<svg style="left:836px;top:208.8px;" width="6.5" height="1" viewBox="0 0 6.5 1"><path d="M0 0.5 H6.5" stroke="#b0b0b0" stroke-width="0.8" stroke-dasharray="1 1"/></svg>
<svg style="left:835.3px;top:178px;" width="1" height="33.5" viewBox="0 0 1 33.5"><path d="M0.5 0 V33.5" stroke="#b0b0b0" stroke-width="0.8" stroke-dasharray="1 1"/></svg>
<span style="left:832px;top:210.7px;font-size:9px;color:#111;">195 components</span>
<div style="left:829px;top:230px;width:237.5px;height:74.5px;background:#fffde9;border:1px solid #bdbdbd;box-sizing:border-box;"></div>
<svg style="left:1068px;top:231.5px;" width="7" height="5" viewBox="0 0 7 5"><path d="M0.7 4.3 L3.5 1 L6.3 4.3" stroke="#111" stroke-width="1.5" fill="none"/></svg>
<span style="left:939.6px;top:230.3px;font-size:12.25px;color:#0a0a7a;font-family:'Liberation Serif','Noto Serif CJK SC',serif;">D?</span>
<span style="left:939.6px;top:289px;font-size:12px;color:#0a0a7a;font-family:'Liberation Serif','Noto Serif CJK SC',serif;">LED1</span>
<svg style="left:905px;top:242px;" width="90" height="52" viewBox="0 0 90 52"><path d="M8 32.6 H78" stroke="#0a0a0a" stroke-width="1.7"/><path d="M35.4 19.6 V47.6 L49.8 33.4 L49.8 31.4 Z" fill="#0000ff"/><path d="M49.9 19.8 V47.6" stroke="#0000ff" stroke-width="1.2"/><path d="M51.3 13.4 L56.6 6.8 M56.9 18.5 L62.6 11.2" stroke="#0000ff" stroke-width="1.4"/><path d="M59.6 3.6 L57.9 9.6 L54.6 7 Z M65.6 8.4 L63.9 14.2 L60.6 11.6 Z" fill="#0000ff" stroke="#0000ff" stroke-width="0.6"/></svg>
<div style="left:829px;top:309px;width:237.5px;height:74.4px;background:#fff;border:1px solid #a6a6a6;box-sizing:border-box;"></div>
<div style="left:830px;top:310px;width:235.5px;height:13px;background:#f0f0f0;"></div>
<div style="left:830px;top:322.6px;width:235.5px;height:0.8px;background:#a8a8a8;"></div>
<span style="left:832px;top:308.5px;font-size:10.25px;color:#111;">模型名称</span>
<div style="left:947.6px;top:311px;width:0.8px;height:11.5px;background:#c4c4c4;"></div>
<span style="left:950.6px;top:308.5px;font-size:10.25px;color:#111;">模型类型</span>
<div style="left:950.6px;top:321.2px;width:40.9px;height:0.8px;background:#555;"></div>
<svg style="left:1068px;top:310.5px;" width="7" height="5" viewBox="0 0 7 5"><path d="M0.7 4.3 L3.5 1 L6.3 4.3" stroke="#111" stroke-width="1.5" fill="none"/></svg>
<svg style="left:842px;top:324.5px;" width="12" height="11" viewBox="0 0 12 11"><path d="M1 1.5 H7 L9.5 4 V10.5 H1 Z" fill="#f2eefb" stroke="#8a78c0" stroke-width="0.8"/><path d="M2.5 7.5 L4 5 L5.5 8 L7 5.5" stroke="#6a58a8" stroke-width="0.8" fill="none"/><path d="M7.5 8.2 L9 9.8 L11.5 6.5" stroke="#2a8a4a" stroke-width="1.1" fill="none"/></svg>
<span style="left:856.6px;top:322px;font-size:8.75px;color:#111;transform:scaleX(0.909);">LED1</span>
<span style="left:949.5px;top:322px;font-size:9px;color:#111;">Simulation</span>
<div style="left:830px;top:336.6px;width:235.5px;height:12.6px;background:#efefef;"></div>
<svg style="left:843px;top:337.8px;" width="11" height="11" viewBox="0 0 11 11"><rect x="2.6" y="0.8" width="5.4" height="8.4" rx="0.8" fill="#5a7a98" stroke="#34506a" stroke-width="0.7"/><path d="M0.8 2.5 H2.6 M0.8 4.5 H2.6 M0.8 6.5 H2.6 M8 2.5 H9.6 M8 4.5 H9.6" stroke="#34506a" stroke-width="0.9"/><path d="M6.5 8 L8 9.8 L10.5 6.5" stroke="#2a6a9a" stroke-width="1.1" fill="none"/></svg>
<span style="left:856.6px;top:335.3px;font-size:8.75px;color:#111;transform:scaleX(0.903);">LED-1</span>
<span style="left:949.5px;top:335.3px;font-size:9.75px;color:#111;">Footprint</span>
<div style="left:829px;top:388.4px;width:237.5px;height:76.5px;background:#000;"></div>
<svg style="left:1068px;top:389px;" width="7" height="5" viewBox="0 0 7 5"><path d="M0.7 4.3 L3.5 1 L6.3 4.3" stroke="#111" stroke-width="1.5" fill="none"/></svg>
<svg style="left:829px;top:388.4px;" width="237.5" height="76.5" viewBox="0 0 237.5 76.5"><rect x="47.3" y="3" width="102.7" height="70.9" fill="none" stroke="#ffff00" stroke-width="1.8"/><path d="M150 14.9 H167 A23.55 23.55 0 0 1 167 62 H150" fill="none" stroke="#ffff00" stroke-width="1.8"/><circle cx="79.7" cy="18.2" r="12.2" fill="#b6b6b6"/><circle cx="79.7" cy="18.2" r="5.6" fill="#17a3a1"/><circle cx="79.7" cy="58.6" r="12.2" fill="#b6b6b6"/><circle cx="79.7" cy="58.6" r="5.6" fill="#17a3a1"/></svg>
<span style="left:907.7px;top:398.6px;font-size:4.5px;color:#d8f0f0;transform:scaleX(0.799);">1</span>
<span style="left:907.5px;top:439px;font-size:4.5px;color:#d8f0f0;">2</span>
<div style="left:836px;top:439.5px;width:19.6px;height:18.3px;background:#f2f2f2;border:1px solid #9a9a9a;box-sizing:border-box;"></div>
<span style="left:840px;top:440.8px;font-size:8.75px;color:#222;transform:scaleX(0.983);">3D</span>
<div style="left:829px;top:469px;width:237.5px;height:78.2px;background:#fff;border:1px solid #a6a6a6;box-sizing:border-box;"></div>
<div style="left:830px;top:470px;width:235.5px;height:24.4px;background:#f0f0f0;"></div>
<div style="left:830px;top:494px;width:235.5px;height:0.8px;background:#a8a8a8;"></div>
<div style="left:898.2px;top:471px;width:0.8px;height:22.5px;background:#c4c4c4;"></div>
<div style="left:967.1px;top:471px;width:0.8px;height:22.5px;background:#c4c4c4;"></div>
<div style="left:1036.6px;top:471px;width:0.8px;height:22.5px;background:#c4c4c4;"></div>
<span style="left:832px;top:469px;font-size:10.25px;color:#111;">供应商</span>
<span style="left:887.5px;top:474.8px;font-size:8px;color:#888;transform:scaleX(1.349);font-style:italic;">/</span>
<span style="left:901px;top:469px;font-size:10.25px;color:#111;">制造商</span>
<span style="left:970.5px;top:469px;font-size:10.25px;color:#111;">描述</span>
<span style="left:1043px;top:469px;font-size:10.5px;color:#111;">单价</span>
<svg style="left:1068px;top:471px;" width="7" height="5" viewBox="0 0 7 5"><path d="M0.7 4.3 L3.5 1 L6.3 4.3" stroke="#111" stroke-width="1.5" fill="none"/></svg>
<div style="left:829px;top:551.7px;width:237.5px;height:75.5px;background:#fff;border:1px solid #a6a6a6;box-sizing:border-box;"></div>
<svg style="left:1068px;top:552.5px;" width="7" height="5" viewBox="0 0 7 5"><path d="M0.7 4.3 L3.5 1 L6.3 4.3" stroke="#111" stroke-width="1.5" fill="none"/></svg>
<div style="left:825px;top:634.4px;width:35.5px;height:14px;background:#fbfbfb;border:1px solid #d9d9d9;box-sizing:border-box;"></div>
<span style="left:828.4px;top:633.6px;font-size:9.75px;color:#111;">偏好的</span>
<span style="left:868.3px;top:633.6px;font-size:10.25px;color:#111;">库</span>
<div style="left:885.3px;top:634.4px;width:47.2px;height:14px;background:#fbfbfb;border:1px solid #d9d9d9;box-sizing:border-box;"></div>
<span style="left:889.5px;top:633.6px;font-size:8.75px;color:#111;transform:scaleX(0.960);">Messages</span>
<div style="left:222.5px;top:634px;width:600px;height:15.5px;background:#efefef;"></div>
<div style="left:222.5px;top:634px;width:0.8px;height:15.5px;background:#bdbdbd;"></div>
<div style="left:222.5px;top:648.4px;width:600px;height:1.6px;background:#e8e8e8;"></div>
<div style="left:222.5px;top:650px;width:600px;height:1.4px;background:#a9a9a9;"></div>
<div style="left:226px;top:637.2px;width:20px;height:9.6px;background:#f20000;"></div>
<div style="left:246px;top:637.2px;width:16px;height:9.6px;background:#f6f6f6;border:1px solid #9c9c9c;box-sizing:border-box;"></div>
<span style="left:249.5px;top:634.2px;font-size:8.75px;color:#8a8a8a;transform:scaleX(0.934);">LS</span>
<svg style="left:269.5px;top:638px;" width="5" height="8" viewBox="0 0 5 8"><path d="M4.2 0.8 L1 4 L4.2 7.2" stroke="#b4b4b4" stroke-width="1.1" fill="none"/></svg>
<svg style="left:284px;top:638.4px;" width="4.5" height="7" viewBox="0 0 4.5 7"><path d="M0.4 0.4 L3.9 3.5 L0.4 6.6 Z" fill="#111"/></svg>
<div style="left:295.8px;top:634.5px;width:59.2px;height:14.5px;background:#dcdcdc;border:1px solid #b8b8b8;box-sizing:border-box;"></div>
<div style="left:301.3px;top:638.2px;width:6.8px;height:6.6px;background:#f00000;"></div>
<span style="left:313.5px;top:633.8px;font-size:8.75px;color:#111;transform:scaleX(0.960);font-weight:bold;">Top Layer</span>
<div style="left:355.5px;top:634.5px;width:71.5px;height:14.5px;background:#fbfbfb;border:1px solid #d0d0d0;box-sizing:border-box;"></div>
<div style="left:361px;top:638.2px;width:6.8px;height:6.6px;background:#0000e8;"></div>
<span style="left:372.6px;top:633.8px;font-size:8.75px;color:#111;">Bottom Layer</span>
<div style="left:427.5px;top:634.5px;width:72.5px;height:14.5px;background:#fbfbfb;border:1px solid #d0d0d0;box-sizing:border-box;"></div>
<div style="left:433.5px;top:638.2px;width:6.8px;height:6.6px;background:#f000f0;"></div>
<span style="left:445px;top:633.8px;font-size:8.75px;color:#111;">Mechanical 1</span>
<div style="left:500.5px;top:634.5px;width:66.5px;height:14.5px;background:#fbfbfb;border:1px solid #d0d0d0;box-sizing:border-box;"></div>
<div style="left:506.5px;top:638.2px;width:6.8px;height:6.6px;background:#f4f400;"></div>
<span style="left:518px;top:633.8px;font-size:8.75px;color:#111;transform:scaleX(0.985);">Top Overlay</span>
<div style="left:506.5px;top:638.2px;width:6.8px;height:6.6px;border:1px solid #9a9a40;box-sizing:border-box;"></div>
<div style="left:567.5px;top:634.5px;width:84.5px;height:14.5px;background:#fbfbfb;border:1px solid #d0d0d0;box-sizing:border-box;"></div>
<div style="left:573px;top:638.2px;width:6.8px;height:6.6px;background:#808000;"></div>
<span style="left:584.7px;top:633.8px;font-size:9px;color:#111;transform:scaleX(1.013);">Bottom Overlay</span>
<div style="left:652.5px;top:634.5px;width:37.5px;height:14.5px;background:#fbfbfb;border:1px solid #d0d0d0;box-sizing:border-box;"></div>
<div style="left:655.5px;top:638.2px;width:6.8px;height:6.6px;background:#f07800;"></div>
<span style="left:667.5px;top:633.8px;font-size:8.75px;color:#111;transform:scaleX(0.939);">Top P</span>
<svg style="left:690px;top:635.5px;" width="22" height="13" viewBox="0 0 22 13"><circle cx="3.6" cy="3" r="2.2" fill="#f6f0a0" stroke="#c8b020" stroke-width="0.8"/><circle cx="3.6" cy="9.6" r="2.2" fill="#f6f0a0" stroke="#c8b020" stroke-width="0.8"/><path d="M8.5 3.2 L13 6.4 L8.5 9.6 Z" fill="#2a78e0"/><path d="M14.5 3.4 H21.2 L18.7 6.4 V9.6 L17 8.8 V6.4 Z" fill="#dbe8f6" stroke="#6f8fb8" stroke-width="0.8"/></svg>
<div style="left:713.5px;top:634.5px;width:108.5px;height:14.5px;background:#e3e3e3;"></div>
<div style="left:741px;top:636px;width:0.8px;height:12px;background:#f8f8f8;"></div>
<div style="left:791px;top:636px;width:0.8px;height:12px;background:#f8f8f8;"></div>
<span style="left:718px;top:633.5px;font-size:10px;color:#787878;">捕捉</span>
<span style="left:746.5px;top:633.5px;font-size:10px;color:#787878;">掩膜级别</span>
<span style="left:795.5px;top:633.5px;font-size:10.25px;color:#787878;">清除</span>
<div style="left:1px;top:651px;width:1078px;height:20px;background:#f1f1f1;"></div>
<span style="left:5px;top:653.5px;font-size:8.75px;color:#111;transform:scaleX(0.966);">X:110mil Y:-95mil</span>
<span style="left:81px;top:653.5px;font-size:9px;color:#111;transform:scaleX(0.987);">Grid: 5mil</span>
<span style="left:135px;top:653.5px;font-size:9.25px;color:#111;">(Hotspot Snap)</span>
<div style="left:383px;top:655px;width:0.8px;height:13px;background:#b8b8b8;"></div>
<div style="left:743px;top:654px;width:336px;height:16.4px;background:#ebebeb;border:1px solid #cfcfcf;box-sizing:border-box;border-right:none;"></div>
<div style="left:777.5px;top:655px;width:1px;height:14.4px;background:#d2d2d2;"></div>
<div style="left:778.5px;top:655px;width:1px;height:14.4px;background:#f6f6f6;"></div>
<span style="left:747px;top:654.3px;font-size:8.75px;color:#555;transform:scaleX(0.926);">System</span>
<div style="left:852.5px;top:655px;width:1px;height:14.4px;background:#d2d2d2;"></div>
<div style="left:853.5px;top:655px;width:1px;height:14.4px;background:#f6f6f6;"></div>
<span style="left:782.5px;top:654.3px;font-size:9px;color:#555;">Design Compiler</span>
<div style="left:907.5px;top:655px;width:1px;height:14.4px;background:#d2d2d2;"></div>
<div style="left:908.5px;top:655px;width:1px;height:14.4px;background:#f6f6f6;"></div>
<span style="left:857.5px;top:654.3px;font-size:9px;color:#555;">Instruments</span>
<div style="left:983.5px;top:655px;width:1px;height:14.4px;background:#d2d2d2;"></div>
<div style="left:984.5px;top:655px;width:1px;height:14.4px;background:#f6f6f6;"></div>
<span style="left:913px;top:654.3px;font-size:9.5px;color:#555;">OpenBus调色板</span>
<div style="left:1022.5px;top:655px;width:1px;height:14.4px;background:#d2d2d2;"></div>
<div style="left:1023.5px;top:655px;width:1px;height:14.4px;background:#f6f6f6;"></div>
<span style="left:989px;top:654.3px;font-size:10.25px;color:#555;">快捷键</span>
<div style="left:1059.5px;top:655px;width:1px;height:14.4px;background:#d2d2d2;"></div>
<div style="left:1060.5px;top:655px;width:1px;height:14.4px;background:#f6f6f6;"></div>
<span style="left:1033px;top:654.3px;font-size:8.75px;color:#555;transform:scaleX(0.861);">PCB</span>
<span style="left:1064.5px;top:654.3px;font-size:8.75px;color:#555;transform:scaleX(0.869);">&gt; &gt;</span>
<svg style="left:804px;top:600px;" width="52" height="42" viewBox="0 0 52 42"><defs><filter id="ws" x="-20%" y="-20%" width="150%" height="150%"><feDropShadow dx="0.8" dy="0.8" stdDeviation="0.7" flood-color="#444" flood-opacity="0.75"/></filter></defs><g filter="url(#ws)"><path d="M20.5 4.4 C11.6 4.4 5.6 9.8 5.6 16.4 C5.6 20.6 8 24 11.6 26.2 L9.6 32.2 L16 28.2 C17.4 28.5 18.9 28.7 20.5 28.7 C29.4 28.7 35.5 23.2 35.5 16.4 C35.5 9.8 29.4 4.4 20.5 4.4 Z" fill="#f8f8f8"/><path d="M34.6 14.6 C26.8 14.6 21.4 19.6 21.4 25.8 C21.4 32 26.8 37 34.6 37 C36.2 37 37.7 36.8 39 36.4 L44.6 39.6 L43.2 34.6 C46.2 32.5 47.9 29.4 47.9 25.8 C47.9 19.6 42.4 14.6 34.6 14.6 Z" fill="#fcfcfc" stroke="#707070" stroke-width="0.9"/></g><circle cx="14.2" cy="12.4" r="1.8" fill="#4a4a4a"/><circle cx="26.6" cy="12.4" r="1.8" fill="#4a4a4a"/><circle cx="29.8" cy="22" r="1.5" fill="#707070"/><circle cx="39.4" cy="22" r="1.5" fill="#707070"/></svg>
<span style="left:860px;top:616.6px;font-size:26.25px;color:#fdfdfd;transform:scaleX(1.004) skewX(-11deg);line-height:36px;height:36px;margin-top:-10px;text-shadow:1px 1px 1px #4a4a4a,-0.6px -0.6px 0.6px #8a8a8a,1.6px 1.6px 2px rgba(60,60,60,0.55);">老潘家的潘老师</span>
<div style="left:0px;top:67px;width:2px;height:584px;background:#6598b5;"></div>
<div style="left:2px;top:67px;width:1px;height:584px;background:#c4d2da;"></div>
<div style="left:1078px;top:67px;width:2px;height:584px;background:#5a93b4;"></div>
</body></html>
